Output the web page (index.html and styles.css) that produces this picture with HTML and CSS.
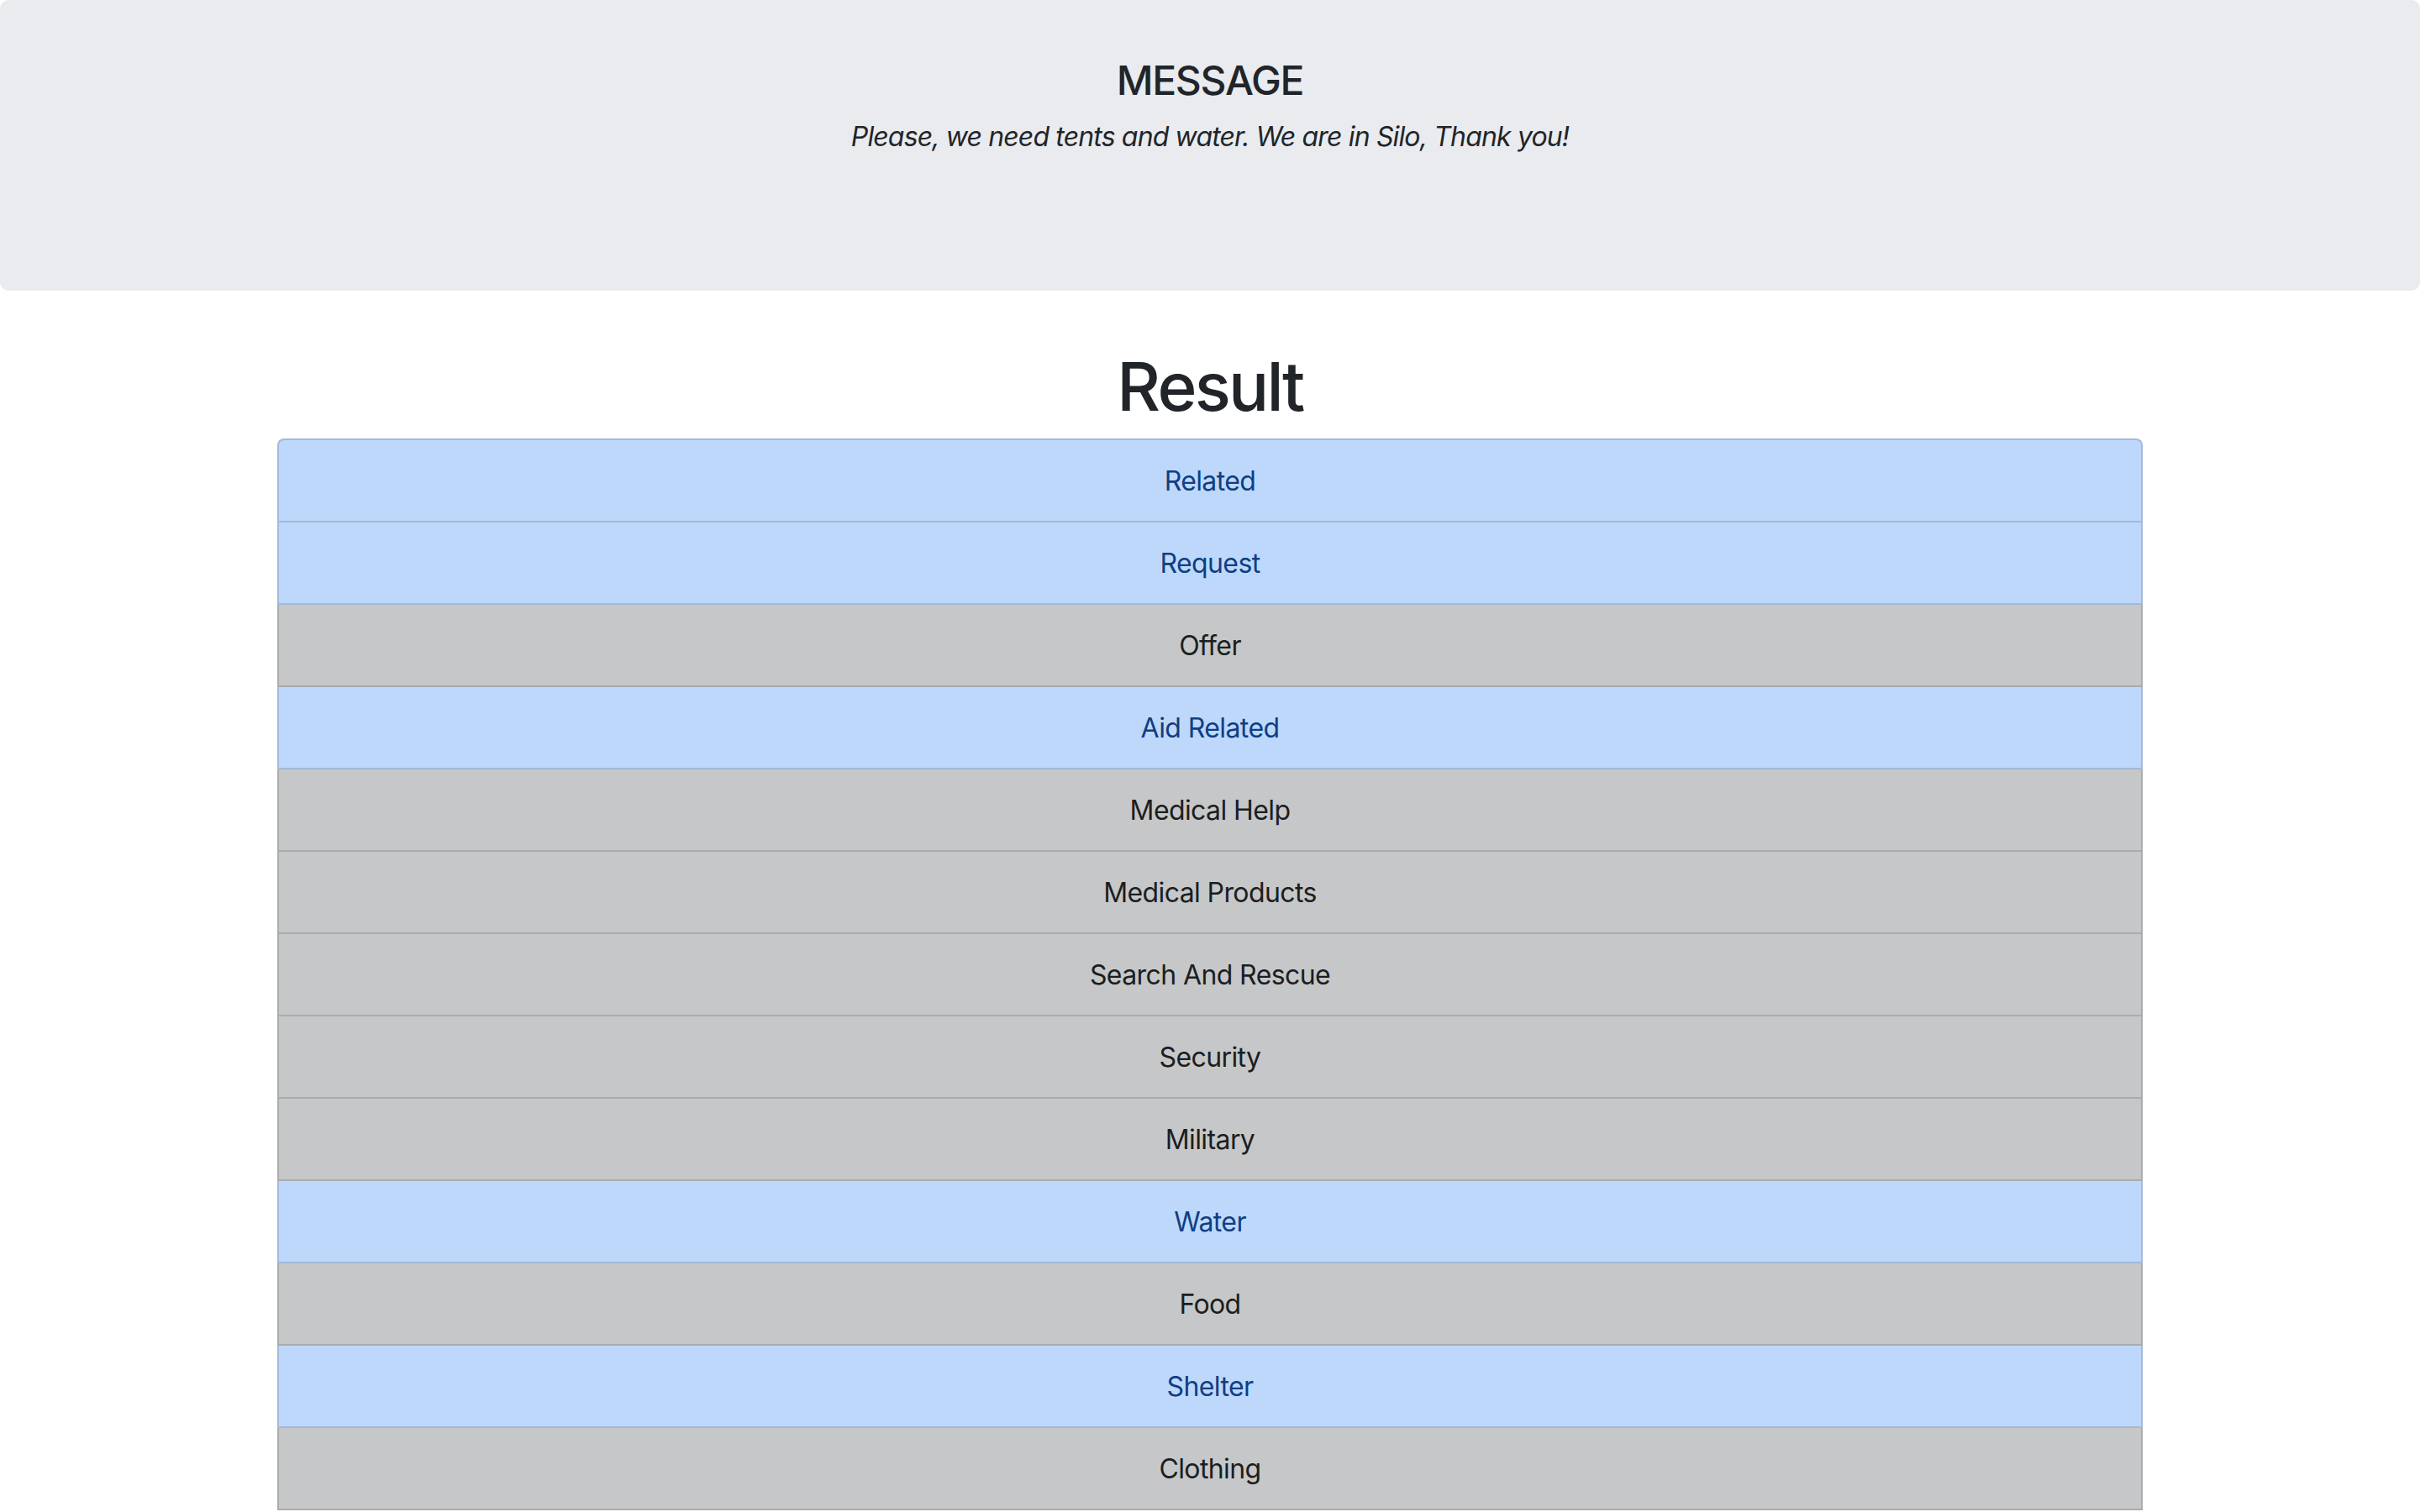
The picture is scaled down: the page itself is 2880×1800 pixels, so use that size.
FILE: index.html
```html
<!DOCTYPE html>
<html lang="en">
<head>
<meta charset="utf-8">
<title>Disaster Response</title>
<link rel="stylesheet" href="styles.css">
</head>
<body>
<div class="jumbotron">
  <h4 class="msg-title">MESSAGE</h4>
  <p class="msg-text">Please, we need tents and water. We are in Silo, Thank you!</p>
</div>
<div class="container">
  <h1 class="result-title">Result</h1>
  <ul class="list-group">
    <li class="item item-primary">Related</li>
    <li class="item item-primary">Request</li>
    <li class="item item-dark">Offer</li>
    <li class="item item-primary">Aid Related</li>
    <li class="item item-dark">Medical Help</li>
    <li class="item item-dark">Medical Products</li>
    <li class="item item-dark">Search And Rescue</li>
    <li class="item item-dark">Security</li>
    <li class="item item-dark">Military</li>
    <li class="item item-primary">Water</li>
    <li class="item item-dark">Food</li>
    <li class="item item-primary">Shelter</li>
    <li class="item item-dark">Clothing</li>
  </ul>
</div>
</body>
</html>
```
FILE: styles.css
```css
html, body {
  margin: 0;
  padding: 0;
}
body {
  font-family: Inter, "Liberation Sans", Arial, sans-serif;
  font-size: 32px;
  line-height: 1.5;
  letter-spacing: -0.6px;
  color: #212529;
  background: #ffffff;
}
.jumbotron {
  background: #e9ebef;
  border-radius: 10px;
  padding: 67px 64px 125px;
  margin-bottom: 64px;
  text-align: center;
}
.msg-title {
  margin: 0 0 14px;
  font-size: 48px;
  font-weight: 500;
  line-height: 1.2;
  letter-spacing: -1.3px;
}
.msg-text {
  margin: 0 0 34px;
  font-style: italic;
  letter-spacing: -0.85px;
}
.container {
  width: 2280px;
  margin: 0 auto;
  padding: 0 30px;
  box-sizing: border-box;
}
.result-title {
  margin: 0 0 14px;
  padding-top: 2px;
  font-size: 80px;
  font-weight: 500;
  line-height: 1.2;
  letter-spacing: -2.7px;
  text-align: center;
}
.list-group {
  list-style: none;
  margin: 0;
  padding: 0;
  display: flex;
  flex-direction: column;
}
.item {
  padding: 25px 40px 23px;
  text-align: center;
  border: 2px solid rgba(0, 0, 0, 0.14);
  border-top-width: 0;
}
.item:first-child {
  border-top-width: 2px;
  border-top-left-radius: 8px;
  border-top-right-radius: 8px;
}
.item-primary {
  background: #bed8fb;
  color: #0e3f84;
}
.item-dark {
  background: #c6c7c8;
  color: #1b1e21;
}
```
